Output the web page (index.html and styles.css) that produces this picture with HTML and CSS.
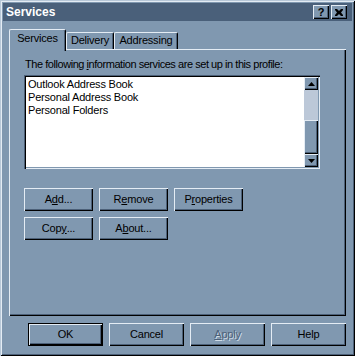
FILE: index.html
```html
<!DOCTYPE html>
<html>
<head>
<meta charset="utf-8">
<link rel="stylesheet" href="styles.css">
</head>
<body>
<div class="window">
  <div class="titlebar">
    <span class="title">Services</span>
    <span class="tbtn help">?</span>
    <span class="tbtn close"><svg width="8" height="7" viewBox="0 0 8 7"><path d="M0 0h2l2 2 2-2h2v1L6 3.5 8 6v1H6L4 5 2 7H0V6l2-2.5L0 1z" fill="#000"/></svg></span>
  </div>
  <div class="content">
    <div class="tabs">
      <div class="tab active tab-services">Services</div>
      <div class="tab tab-delivery">Delivery</div>
      <div class="tab tab-addressing">Addressing</div>
    </div>
    <div class="panel">
      <div class="label">The following <u>i</u>nformation services are set up in this profile:</div>
      <div class="listbox">
        <div class="items">
          <div class="item">Outlook Address Book</div>
          <div class="item">Personal Address Book</div>
          <div class="item">Personal Folders</div>
        </div>
        <div class="scrollbar">
          <div class="sbtn"><svg width="7" height="4" viewBox="0 0 7 4"><path d="M3.5 0L7 4H0z" fill="#000"/></svg></div>
          <div class="track"></div>
          <div class="thumb"></div>
          <div class="sbtn"><svg width="7" height="4" viewBox="0 0 7 4"><path d="M0 0h7L3.5 4z" fill="#000"/></svg></div>
        </div>
      </div>
      <div class="btnrow">
        <div class="btn">A<u>d</u>d...</div>
        <div class="btn">R<u>e</u>move</div>
        <div class="btn">P<u>r</u>operties</div>
      </div>
      <div class="btnrow">
        <div class="btn">Cop<u>y</u>...</div>
        <div class="btn">A<u>b</u>out...</div>
      </div>
    </div>
    <div class="footer">
      <div class="btn wide default">OK</div>
      <div class="btn wide">Cancel</div>
      <div class="btn wide disabled"><u>A</u>pply</div>
      <div class="btn wide">Help</div>
    </div>
  </div>
</div>
</body>
</html>
```
FILE: styles.css
```css
* { box-sizing: border-box; }
html, body { margin: 0; padding: 0; }
body {
  width: 355px;
  height: 356px;
  overflow: hidden;
  background: #8098b0;
  font-family: "Liberation Sans", Arial, sans-serif;
  font-size: 11px;
  letter-spacing: -0.2px;
  color: #000;
}
.window {
  width: 355px;
  height: 356px;
  padding: 3px;
  background: #8098b0;
  box-shadow: inset 1px 1px #b8c8d8, inset -1px -1px #000, inset 2px 2px #e4ecf4, inset -2px -2px #4c6078;
  display: flex;
  flex-direction: column;
}
.titlebar {
  height: 18px;
  background: #4a607a;
  display: flex;
  align-items: center;
  padding: 0 5px 0 3px;
}
.title {
  flex: 1;
  color: #fff;
  font-weight: bold;
  font-size: 12px;
  letter-spacing: 0;
}
.tbtn {
  width: 16px;
  height: 14px;
  background: #8098b0;
  box-shadow: inset 1px 1px #e4ecf4, inset -1px -1px #000, inset -2px -2px #4c6078;
  display: flex;
  align-items: center;
  justify-content: center;
  font-weight: bold;
  font-size: 11px;
  letter-spacing: 0;
  line-height: 14px;
}
.tbtn.help { margin-right: 2px; }
.content {
  padding: 8px 6px 0;
}
.tabs {
  display: flex;
  align-items: flex-end;
  height: 20px;
  position: relative;
  z-index: 1;
}
.tab {
  height: 17px;
  line-height: 15px;
  text-align: center;
  background: #8098b0;
  border-top: 1px solid #e4ecf4;
  border-left: 1px solid #e4ecf4;
  border-right: 1px solid #000;
  border-radius: 2px 2px 0 0;
  box-shadow: inset -1px 0 #4c6078;
}
.tab-services { width: 57px; }
.tab-delivery { width: 48px; }
.tab-addressing { width: 64px; }
.tab.active {
  height: 22px;
  margin-bottom: -2px;
  line-height: 16px;
}
.panel {
  height: 267px;
  padding: 9px 0 0 15px;
  box-shadow: inset 1px 1px #e4ecf4, inset -1px -1px #000, inset -2px -2px #4c6078;
}
.label { line-height: 13px; white-space: nowrap; padding-left: 1px; letter-spacing: -0.45px; }
.listbox {
  margin-top: 4px;
  width: 296px;
  height: 94px;
  padding: 2px;
  background: #fff;
  display: flex;
  box-shadow: inset 1px 1px #4c6078, inset 2px 2px #000, inset -1px -1px #e4ecf4, inset -2px -2px #8098b0;
}
.items { flex: 1; padding-left: 2px; padding-top: 1px; }
.item { line-height: 13px; white-space: nowrap; }
.scrollbar {
  width: 14px;
  display: flex;
  flex-direction: column;
}
.sbtn {
  height: 13px;
  background: #8098b0;
  box-shadow: inset 1px 1px #e4ecf4, inset -1px -1px #000, inset -2px -2px #4c6078;
  display: flex;
  align-items: center;
  justify-content: center;
}
.sbtn svg { display: block; }
.track { height: 30px; background: #bcc8d8; }
.thumb {
  height: 34px;
  background: #8098b0;
  box-shadow: inset 1px 1px #e4ecf4, inset -1px -1px #000, inset -2px -2px #4c6078;
}
.btnrow {
  display: flex;
  gap: 6px;
  margin-top: 19px;
}
.btnrow + .btnrow { margin-top: 6px; }
.btn {
  width: 69px;
  height: 23px;
  display: flex;
  align-items: center;
  justify-content: center;
  line-height: 13px;
  background: #8098b0;
  box-shadow: inset 1px 1px #e4ecf4, inset -1px -1px #000, inset -2px -2px #4c6078;
}
.btn.wide { width: 75px; }
.btn.default {
  border: 1px solid #000;
}
.btn.disabled {
  color: #4c6078;
  text-shadow: 1px 1px #d0dce8;
}
.footer {
  display: flex;
  justify-content: flex-end;
  gap: 6px;
  margin-top: 7px;
}
```
